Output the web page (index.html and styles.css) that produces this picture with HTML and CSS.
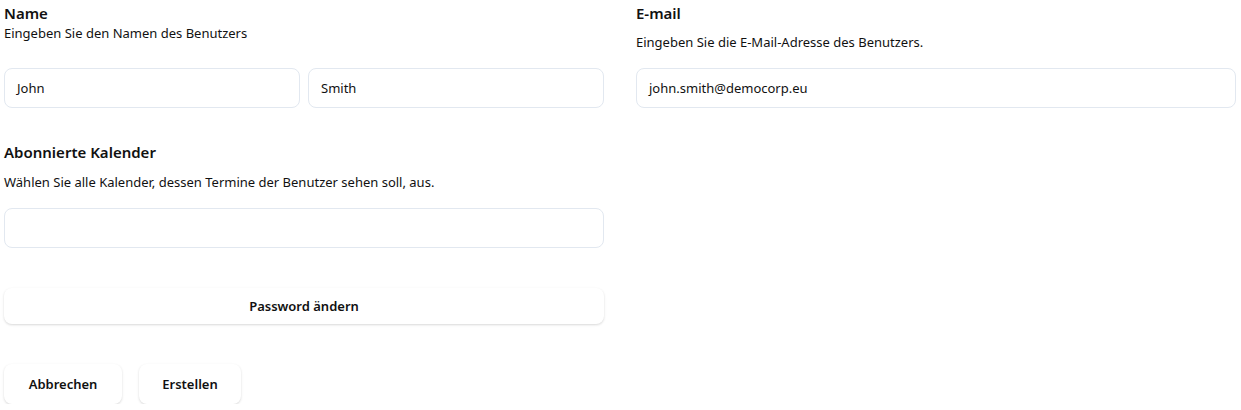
FILE: index.html
```html
<!DOCTYPE html>
<html lang="de">
<head>
<meta charset="utf-8">
<title>Benutzer</title>
<link rel="stylesheet" href="styles.css">
</head>
<body>
<form class="form">
  <div class="grid">
    <section class="field field-name">
      <h3 class="title">Name</h3>
      <p class="desc desc-name">Eingeben Sie den Namen des Benutzers</p>
      <div class="pair">
        <div class="input">John</div>
        <div class="input">Smith</div>
      </div>
    </section>
    <section class="field">
      <h3 class="title">E-mail</h3>
      <p class="desc">Eingeben Sie die E-Mail-Adresse des Benutzers.</p>
      <div class="input">john.smith@democorp.eu</div>
    </section>
    <section class="field field-cal">
      <h3 class="title">Abonnierte Kalender</h3>
      <p class="desc">Wählen Sie alle Kalender, dessen Termine der Benutzer sehen soll, aus.</p>
      <div class="input"></div>
      <button type="button" class="btn btn-wide">Password ändern</button>
    </section>
  </div>
  <div class="actions">
    <button type="button" class="btn btn-action btn-cancel">Abbrechen</button>
    <button type="button" class="btn btn-action btn-create">Erstellen</button>
  </div>
</form>
</body>
</html>
```
FILE: styles.css
```css
* { box-sizing: border-box; }
html, body { margin: 0; padding: 0; background: #ffffff; }
body {
  font-family: "Noto Sans", "Open Sans", sans-serif;
  color: #111111;
  font-size: 13px;
}
.form {
  padding: 3px 5px 0 4px;
}
.grid {
  display: grid;
  grid-template-columns: 600px 600px;
  column-gap: 32px;
  align-items: start;
}
.field {
  display: flex;
  flex-direction: column;
}
.title {
  margin: 0;
  font-size: 15px;
  font-weight: 600;
  line-height: 20px;
  color: #111;
}
.desc {
  margin: 10px 0 17px;
  font-size: 13px;
  line-height: 18px;
}
.desc-name { margin: 1px 0 26px; }
.pair {
  display: flex;
  gap: 8px;
}
.pair .input { flex: 1; }
.input {
  height: 40px;
  border: 1px solid #e2e8f0;
  border-radius: 8px;
  padding: 0 12px;
  display: flex;
  align-items: center;
  font-size: 13px;
  color: #111;
  background: #fff;
}
.field-cal { margin-top: 34px; }
.field-cal .desc { margin-top: 11px; }
.btn {
  font-family: inherit;
  border: none;
  background: #fff;
  border-radius: 8px;
  font-weight: 600;
  font-size: 13px;
  color: #111;
  box-shadow: 0 1px 3px rgba(0,0,0,0.1), 0 1px 2px rgba(0,0,0,0.06);
  cursor: pointer;
}
.btn-wide {
  margin-top: 40px;
  height: 36px;
  width: 100%;
}
.actions {
  display: flex;
  gap: 17px;
  margin-top: 40px;
}
.btn-action {
  height: 40px;
  padding: 0;
}
.btn-cancel { width: 118px; }
.btn-create { width: 102px; }
```
